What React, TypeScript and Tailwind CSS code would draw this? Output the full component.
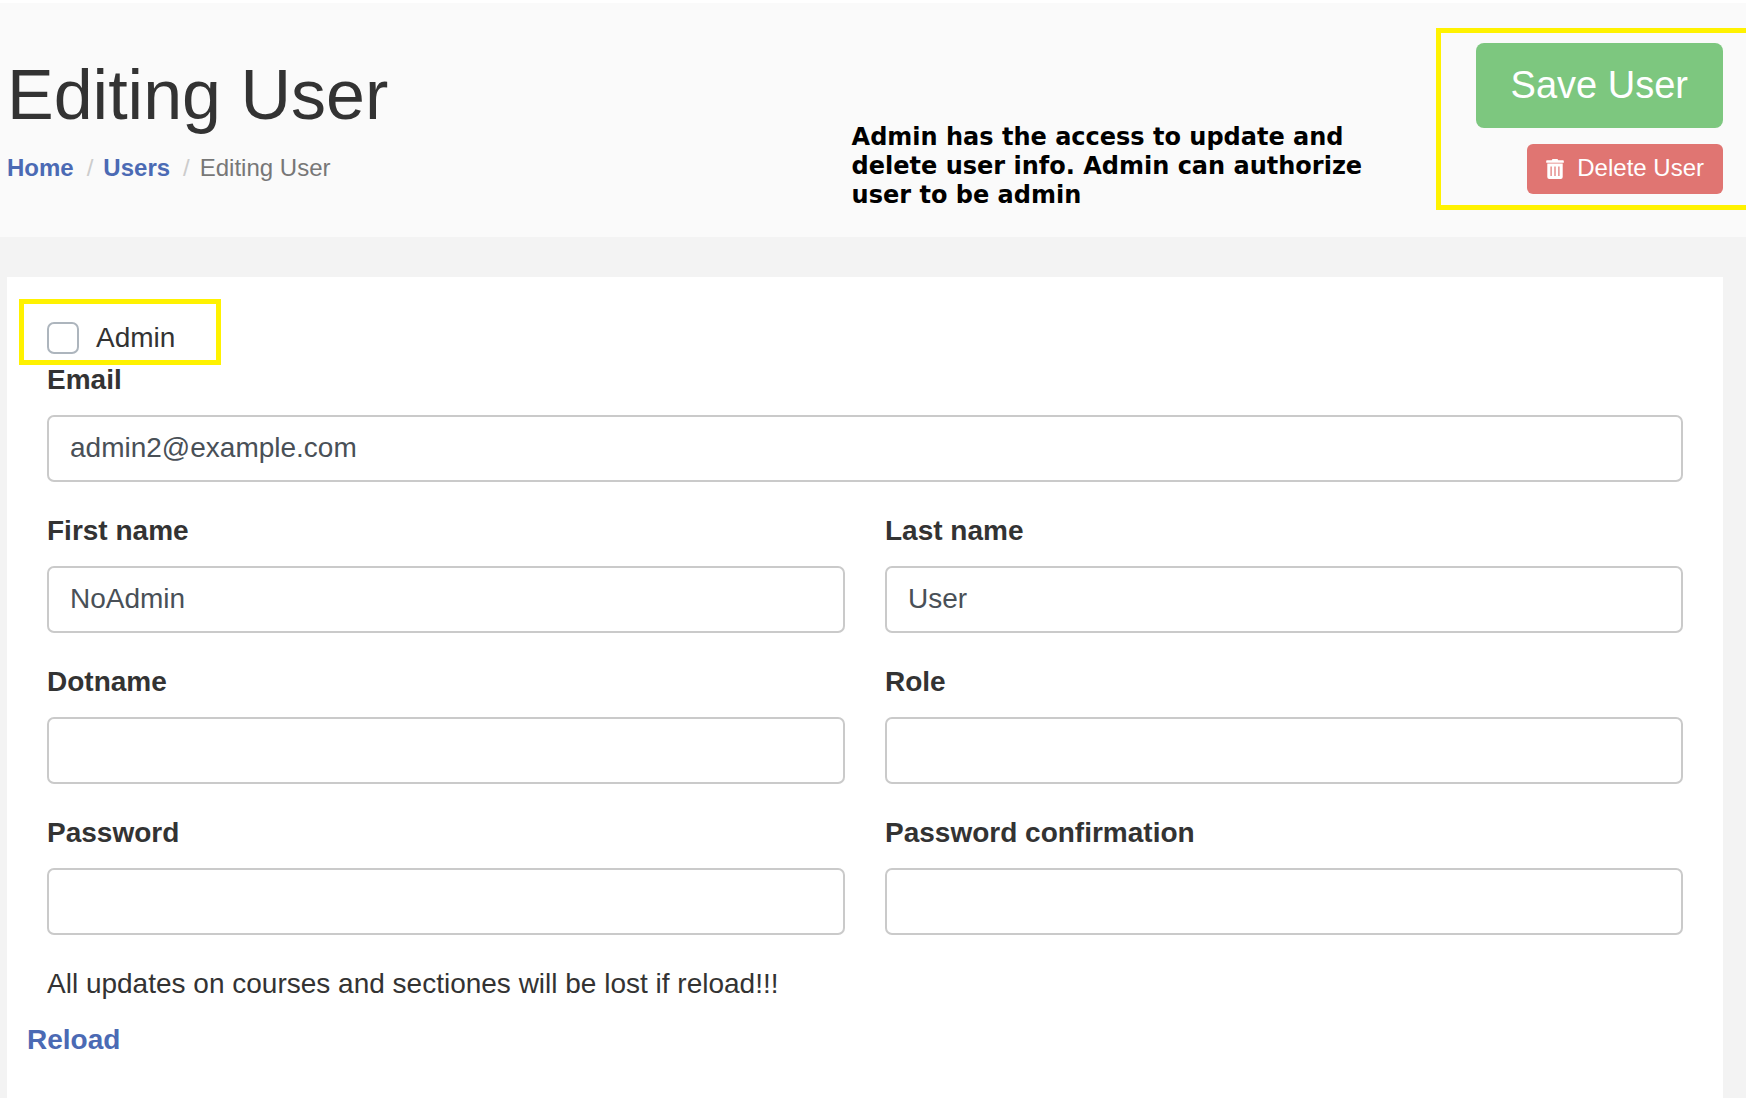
import { useId } from "react";

type FieldProps = { label: string; value?: string; type?: string };

function Field({ label, value = "", type = "text" }: FieldProps) {
  const id = useId();
  return (
    <div className="mb-7 min-w-0">
      <label htmlFor={id} className="mb-3.5 block font-bold">
        {label}
      </label>
      <input
        id={id}
        type={type}
        defaultValue={value}
        className="block h-[67px] w-full rounded-[7px] border-2 border-[#cacaca] bg-white px-[21px] pb-0.5 text-[#495057] outline-none focus:border-[#4b6ab4]"
      />
    </div>
  );
}

function TrashIcon() {
  return (
    <svg width="18" height="20" viewBox="0 0 18 20" fill="currentColor" aria-hidden="true">
      <path d="M6.5 0h5l.8 1.3H17a.8.8 0 0 1 .8.8v1.7H.2V2.100a.8.8 0 0 1 .8-.8h4.700z" />
      <path
        fillRule="evenodd"
        d="M1.300 4.600h15.400V18a2 2 0 0 1-2 2H3.300a2 2 0 0 1-2-2zM4.500 7.400v9.600h1.200V7.400zM8.400 7.400v9.600h1.200V7.400zM12.300 7.400v9.600h1.200V7.400z"
      />
    </svg>
  );
}

export default function App() {
  return (
    <div className="flex min-h-screen flex-col border-t-[3px] border-white bg-[#f3f3f3] font-['Liberation_Sans',Arial,sans-serif] text-[28px] leading-[42px] text-[#333]">
      <header className="flex items-start overflow-hidden bg-[#fafafa] pt-10 pr-[23px] pb-[27px] pl-[7px]">
        <div className="pt-3.5">
          <h1 className="text-[70px] leading-[77px]">Editing User</h1>
          <nav aria-label="Breadcrumb" className="mt-4">
            <ol className="flex text-2xl leading-9">
              <li>
                <a href="#home" className="font-bold text-[#4b6ab4]">Home</a>
              </li>
              <li className="flex">
                <span aria-hidden="true" className="mr-2.5 ml-[13px] text-[#ccc]">/</span>
                <a href="#users" className="font-bold text-[#4b6ab4]">Users</a>
              </li>
              <li className="flex text-[#777]" aria-current="page">
                <span aria-hidden="true" className="mr-2.5 ml-[13px] text-[#ccc]">/</span>
                Editing User
              </li>
            </ol>
          </nav>
        </div>
        <p className="mt-20 mr-[104px] ml-auto w-[520px] font-['Gill_Sans_Ultra_Bold','DejaVu_Sans',sans-serif] text-2xl leading-[29px] font-black text-black">
          Admin has the access to update and
          <br />
          delete user info. Admin can authorize
          <br />
          user to be admin
        </p>
        <div className="relative flex shrink-0 flex-col items-end gap-4">
          <div className="pointer-events-none absolute -top-[15px] -right-8 -bottom-4 -left-10 border-5 border-[#fff200]" />
          <button
            type="submit"
            form="user-form"
            className="h-[85px] rounded-lg bg-[#7dc77f] px-[35px] text-[38px] leading-[57px] text-white"
          >
            Save User
          </button>
          <button
            type="button"
            className="flex h-[50px] items-center gap-[13px] rounded-md bg-[#e07572] px-[19px] text-2xl text-white"
          >
            <TrashIcon />
            <span className="pb-0.5">Delete User</span>
          </button>
        </div>
      </header>

      <main className="mt-10 mr-[23px] ml-[7px] flex-1 bg-white px-5 pt-10">
        <form id="user-form" className="px-5" onSubmit={(e) => e.preventDefault()}>
          <div className="relative flex w-fit items-center gap-[17px]">
            <div className="pointer-events-none absolute -top-[18px] -right-[46px] -bottom-1.5 -left-7 border-5 border-[#fff200]" />
            <input
              id="admin"
              type="checkbox"
              className="size-8 appearance-none rounded-[7px] border-2 border-[#adb5bd] bg-white checked:bg-[#4b6ab4]"
            />
            <label htmlFor="admin">Admin</label>
          </div>
          <Field label="Email" value="admin2@example.com" type="email" />
          <div className="grid grid-cols-2 gap-x-10">
            <Field label="First name" value="NoAdmin" />
            <Field label="Last name" value="User" />
            <Field label="Dotname" />
            <Field label="Role" />
            <Field label="Password" type="password" />
            <Field label="Password confirmation" type="password" />
          </div>
          <p className="mb-3.5">All updates on courses and sectiones will be lost if reload!!!</p>
        </form>
        <a href="#reload" className="font-bold text-[#4b6ab4]">Reload</a>
      </main>
    </div>
  );
}
